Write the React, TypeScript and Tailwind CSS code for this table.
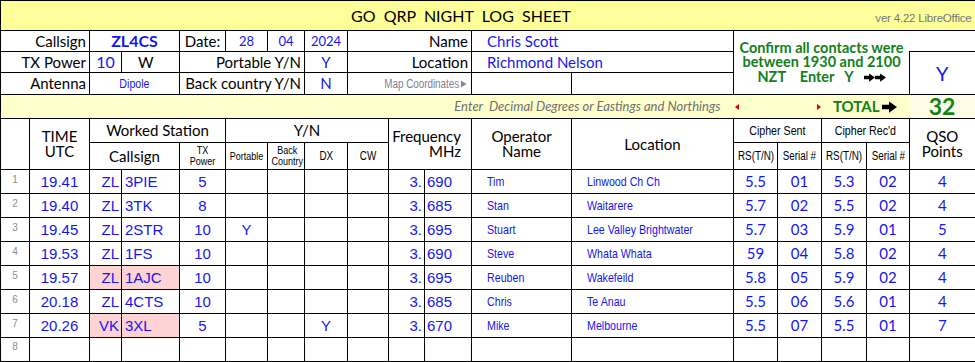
import React from 'react';

const cal = "font-['Lato','Open_Sans',sans-serif]";
const ari = "font-['Liberation_Sans',Arial,sans-serif]";
const blue = 'text-[#1616f2]';
const green = 'text-[#13801a]';

type CellProps = {
    children?: React.ReactNode;
    className?: string;
    colSpan?: number;
    rowSpan?: number;
};

const C = ({ children, className = '', colSpan, rowSpan }: CellProps) => (
    <td colSpan={colSpan} rowSpan={rowSpan} className={`border border-black p-0 leading-none align-middle ${className}`}>
        {children}
    </td>
);

// Arial Narrow stand-in: Liberation Sans squeezed horizontally
const N = ({ children, o = 'c' }: { children: React.ReactNode; o?: 'l' | 'c' | 'r' }) => (
    <span
        className={`inline-block whitespace-nowrap scale-x-[0.82] ${ari} ${
            o === 'l' ? 'origin-left' : o === 'r' ? 'origin-right' : 'origin-center'
        }`}
    >
        {children}
    </span>
);

const Arrow = ({ w, h }: { w: number; h: number }) => (
    <svg width={w} height={h} viewBox="0 0 16 12" className="inline-block">
        <path d="M0 3.5h7.5V0L16 6l-8.5 6V8.5H0z" fill="black" />
    </svg>
);

const rows = [
    { time: '19.41', pre: 'ZL', call: '3PIE', pwr: '5', port: '', dx: '', mhz: '690', op: 'Tim', loc: 'Linwood Ch Ch', rs: '5.5', ss: '01', rr: '5.3', sr: '02', pts: '4', pink: false },
    { time: '19.40', pre: 'ZL', call: '3TK', pwr: '8', port: '', dx: '', mhz: '685', op: 'Stan', loc: 'Waitarere', rs: '5.7', ss: '02', rr: '5.5', sr: '02', pts: '4', pink: false },
    { time: '19.45', pre: 'ZL', call: '2STR', pwr: '10', port: 'Y', dx: '', mhz: '695', op: 'Stuart', loc: 'Lee Valley Brightwater', rs: '5.7', ss: '03', rr: '5.9', sr: '01', pts: '5', pink: false },
    { time: '19.53', pre: 'ZL', call: '1FS', pwr: '10', port: '', dx: '', mhz: '690', op: 'Steve', loc: 'Whata Whata', rs: '59', ss: '04', rr: '5.8', sr: '02', pts: '4', pink: false },
    { time: '19.57', pre: 'ZL', call: '1AJC', pwr: '10', port: '', dx: '', mhz: '695', op: 'Reuben', loc: 'Wakefeild', rs: '5.8', ss: '05', rr: '5.9', sr: '02', pts: '4', pink: true },
    { time: '20.18', pre: 'ZL', call: '4CTS', pwr: '10', port: '', dx: '', mhz: '685', op: 'Chris', loc: 'Te Anau', rs: '5.5', ss: '06', rr: '5.6', sr: '01', pts: '4', pink: false },
    { time: '20.26', pre: 'VK', call: '3XL', pwr: '5', port: '', dx: 'Y', mhz: '670', op: 'Mike', loc: 'Melbourne', rs: '5.5', ss: '07', rr: '5.5', sr: '01', pts: '7', pink: true },
];

export default function App() {
    return (
        <div className="w-[975px] h-[362px] bg-white overflow-hidden">
            <table className="table-fixed border-collapse w-[975px] text-black">
                <colgroup>
                    <col className="w-[29px]" />
                    <col className="w-[60px]" />
                    <col className="w-[32px]" />
                    <col className="w-[58px]" />
                    <col className="w-[46px]" />
                    <col className="w-[42px]" />
                    <col className="w-[37px]" />
                    <col className="w-[43px]" />
                    <col className="w-[41px]" />
                    <col className="w-[36px]" />
                    <col className="w-[47px]" />
                    <col className="w-[100px]" />
                    <col className="w-[162px]" />
                    <col className="w-[44px]" />
                    <col className="w-[44px]" />
                    <col className="w-[45px]" />
                    <col className="w-[43px]" />
                    <col className="w-[66px]" />
                </colgroup>
                <tbody>
                    {/* Title */}
                    <tr className="h-[30px]">
                        <C colSpan={18} className="bg-[#ffff99] border-r-2">
                            <div className="flex items-center">
                                <span className={`${cal} text-[16px] ml-[350px] whitespace-pre`}>GO  QRP  NIGHT  LOG  SHEET</span>
                                <span className={`${ari} text-[11.5px] text-[#777777] ml-auto mr-[3px] mt-[6px] tracking-[-0.2px]`}>ver 4.22 LibreOffice</span>
                            </div>
                        </C>
                    </tr>

                    {/* Callsign / date / name */}
                    <tr className={`h-[21px] ${cal} text-[15px]`}>
                        <C colSpan={2} className="text-right pr-[3px]">Callsign</C>
                        <C colSpan={2} className={`text-center font-bold text-[16px] ${blue}`}>ZL4CS</C>
                        <C className="text-center">Date:</C>
                        <C className={`text-center text-[13px] ${blue}`}>28</C>
                        <C className={`text-center text-[13px] ${blue}`}>04</C>
                        <C className={`text-center text-[13px] ${blue}`}>2024</C>
                        <C colSpan={3} className="text-right pr-[3px]">Name</C>
                        <C colSpan={2} className={`pl-[15px] ${blue}`}>Chris Scott</C>
                        <C colSpan={4} rowSpan={3} className={`border-r-0 text-center font-bold text-[14.5px] leading-[16px] ${green}`}>
                            <div>Confirm all contacts were</div>
                            <div>between 1930 and 2100</div>
                            <div className="flex items-center justify-center whitespace-pre">
                                NZT    Enter   Y   <span className="flex"><Arrow w={11} h={9} /><Arrow w={11} h={9} /></span>
                            </div>
                        </C>
                        <C className="border-l-0 border-r-2"></C>
                    </tr>

                    <tr className={`h-[21px] ${cal} text-[15px]`}>
                        <C colSpan={2} className="text-right pr-[3px]">TX Power</C>
                        <C className={`text-center text-[16px] ${blue}`}>10</C>
                        <C className="pl-[16px]">W</C>
                        <C colSpan={3} className="text-right pr-[3px]">Portable Y/N</C>
                        <C className={`text-center ${blue}`}>Y</C>
                        <C colSpan={3} className="text-right pr-[3px]">Location</C>
                        <C colSpan={2} className={`pl-[15px] ${blue}`}>Richmond Nelson</C>
                        <C rowSpan={2} className={`text-center text-[20px] border-r-2 ${blue}`}>Y</C>
                    </tr>

                    <tr className={`h-[22px] ${cal} text-[15px]`}>
                        <C colSpan={2} className="text-right pr-[3px]">Antenna</C>
                        <C colSpan={2} className={`text-center text-[13px] ${blue}`}><N>Dipole</N></C>
                        <C colSpan={3} className="text-right pr-[3px]">Back country Y/N</C>
                        <C className={`text-center ${blue}`}>N</C>
                        <C colSpan={3} className="text-right pr-[4px] text-[12px] text-[#7d8190]">
                            <N o="r">
                                Map Coordinates
                                <svg width="8" height="8" viewBox="0 0 8 8" className="inline-block ml-[2px] -mt-[1px]">
                                    <path d="M0.5 0.5L7.5 4L0.5 7.5z" fill="#8a8a8a" />
                                </svg>
                            </N>
                        </C>
                        <C></C>
                        <C></C>
                    </tr>

                    {/* Enter / total row */}
                    <tr className="h-[23px] bg-[#ffffcc]">
                        <C colSpan={13} className={`border-r-0 text-right pr-[13px] italic ${cal} text-[13px] text-[#6f6f6f] whitespace-pre`}>
                            Enter  Decimal Degrees or Eastings and Northings
                        </C>
                        <C colSpan={2} className="border-x-0">
                            <div className="flex justify-between px-[1px]">
                                <svg width="4" height="6" viewBox="0 0 4 6"><path d="M0 3L4 0V6z" fill="#e00000" /></svg>
                                <svg width="4" height="6" viewBox="0 0 4 6"><path d="M4 3L0 0V6z" fill="#e00000" /></svg>
                            </div>
                        </C>
                        <C colSpan={2} className="border-x-0">
                            <div className={`flex items-center justify-end pr-[13px] gap-[2px] ${cal} font-bold text-[15px] ${green}`}>
                                TOTAL <Arrow w={15} h={12} />
                            </div>
                        </C>
                        <C className={`border-l-0 border-r-2 bg-[#fffde6] text-center ${cal} font-bold text-[23px] ${green}`}>32</C>
                    </tr>

                    {/* Table headings */}
                    <tr className={`h-[24px] ${cal} text-[15px]`}>
                        <C rowSpan={2}></C>
                        <C rowSpan={2} className="text-center leading-[16px]">TIME<br />UTC</C>
                        <C colSpan={3} className="text-center">Worked Station</C>
                        <C colSpan={4} className="text-center">Y/N</C>
                        <C colSpan={2} rowSpan={2} className="text-right pr-[10px] leading-[16px]">Frequency<br />MHz</C>
                        <C rowSpan={2} className="text-center leading-[16px]">Operator<br />Name</C>
                        <C rowSpan={2} className="text-center">Location</C>
                        <C colSpan={2} className="text-center text-[13px]"><N>Cipher Sent</N></C>
                        <C colSpan={2} className="text-center text-[13px]"><N>Cipher Rec'd</N></C>
                        <C rowSpan={2} className="text-center leading-[16px] border-r-2">QSO<br />Points</C>
                    </tr>
                    <tr className={`h-[27px] ${cal} text-[15px]`}>
                        <C colSpan={2} className="text-center">Callsign</C>
                        <C className="text-center text-[11px] leading-[11px]"><N>TX<br />Power</N></C>
                        <C className="text-center text-[11px]"><N>Portable</N></C>
                        <C className="text-center text-[11px] leading-[11px]"><N>Back<br />Country</N></C>
                        <C className="text-center text-[12px]"><N>DX</N></C>
                        <C className="text-center text-[12px]"><N>CW</N></C>
                        <C className="text-center text-[12px]"><N>RS(T/N)</N></C>
                        <C className="text-center text-[12px]"><N>Serial #</N></C>
                        <C className="text-center text-[12px]"><N>RS(T/N)</N></C>
                        <C className="text-center text-[12px]"><N>Serial #</N></C>
                    </tr>

                    {/* Log entries */}
                    {rows.map((r, i) => (
                        <tr key={i} className={`h-[24px] ${blue}`}>
                            <C className={`text-center align-bottom pb-[4px] ${ari} text-[10px] text-[#8c8c8c]`}>{i + 1}</C>
                            <C className={`text-center ${ari} text-[15px]`}>{r.time}</C>
                            <C className={`text-right pr-[2px] ${ari} text-[15px] ${r.pink ? 'bg-[#fdd3d3]' : ''}`}>{r.pre}</C>
                            <C className={`pl-[3px] ${ari} text-[15px] ${r.pink ? 'bg-[#fdd3d3]' : ''}`}>{r.call}</C>
                            <C className={`text-center ${ari} text-[15px]`}>{r.pwr}</C>
                            <C className={`text-center ${ari} text-[15px]`}>{r.port}</C>
                            <C></C>
                            <C className={`text-center ${ari} text-[15px]`}>{r.dx}</C>
                            <C></C>
                            <C className={`text-right pr-[2px] ${ari} text-[15px]`}>3.</C>
                            <C className={`pl-[2px] ${ari} text-[15px]`}>{r.mhz}</C>
                            <C className="pl-[15px] text-[13px]"><N o="l">{r.op}</N></C>
                            <C className="pl-[15px] text-[13px]"><N o="l">{r.loc}</N></C>
                            <C className={`text-center ${cal} text-[15px]`}>{r.rs}</C>
                            <C className={`text-center ${cal} text-[15px]`}>{r.ss}</C>
                            <C className={`text-center ${cal} text-[15px]`}>{r.rr}</C>
                            <C className={`text-center ${cal} text-[15px]`}>{r.sr}</C>
                            <C className={`text-center ${cal} text-[15px] border-r-2`}>{r.pts}</C>
                        </tr>
                    ))}
                    <tr className="h-[24px]">
                        <C className={`text-center align-bottom pb-[4px] border-b-2 ${ari} text-[10px] text-[#8c8c8c]`}>8</C>
                        <C className="border-b-2"></C>
                        <C className="border-b-2"></C>
                        <C className="border-b-2"></C>
                        <C className="border-b-2"></C>
                        <C className="border-b-2"></C>
                        <C className="border-b-2"></C>
                        <C className="border-b-2"></C>
                        <C className="border-b-2"></C>
                        <C className="border-b-2"></C>
                        <C className="border-b-2"></C>
                        <C className="border-b-2"></C>
                        <C className="border-b-2"></C>
                        <C className="border-b-2"></C>
                        <C className="border-b-2"></C>
                        <C className="border-b-2"></C>
                        <C className="border-b-2"></C>
                        <C className="border-b-2 border-r-2"></C>
                    </tr>
                </tbody>
            </table>
        </div>
    );
}
